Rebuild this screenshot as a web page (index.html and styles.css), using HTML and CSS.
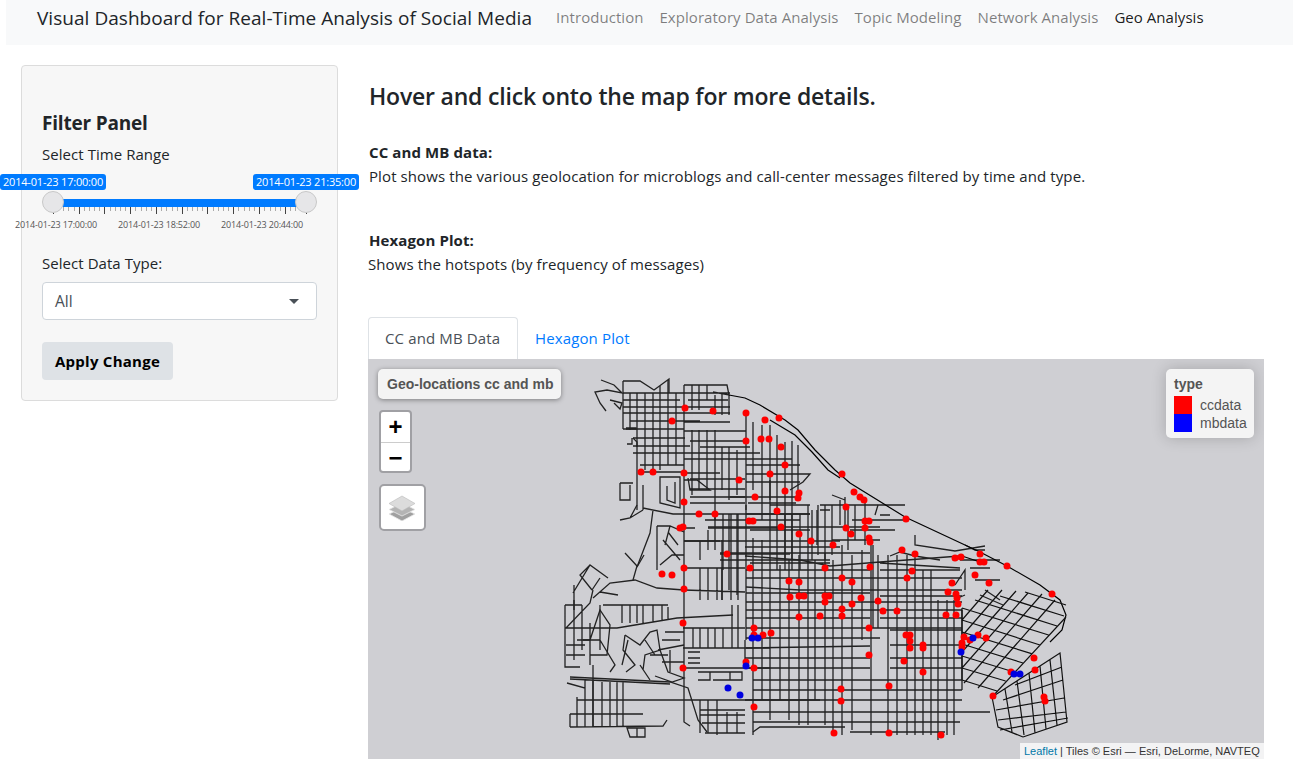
FILE: index.html
```html
<!DOCTYPE html>
<html lang="en">
<head>
<meta charset="utf-8">
<title>Visual Dashboard</title>
<link rel="stylesheet" href="styles.css">
</head>
<body>
<nav class="navbar">
  <span class="brand">Visual Dashboard for Real-Time Analysis of Social Media</span>
  <a class="nav-link">Introduction</a>
  <a class="nav-link">Exploratory Data Analysis</a>
  <a class="nav-link">Topic Modeling</a>
  <a class="nav-link">Network Analysis</a>
  <a class="nav-link active">Geo Analysis</a>
</nav>
<div class="page">
  <aside class="well">
    <h4 class="panel-title">Filter Panel</h4>
    <div class="label">Select Time Range</div>
    <div class="slider">
      <span class="from">2014-01-23 17:00:00</span>
      <span class="to">2014-01-23 21:35:00</span>
      <div class="track"></div>
      <svg class="ticks" width="275" height="12" viewBox="42 208 275 12">
        <path class="minor" d="M58.500 208v4M63.500 208v4M68.500 208v4M74.500 208v4M84.500 208v4M89.500 208v4M94.500 208v4M99.500 208v4M110.500 208v4M115.500 208v4M120.500 208v4M125.500 208v4M135.500 208v4M141.500 208v4M146.500 208v4M151.500 208v4M161.500 208v4M166.500 208v4M172.500 208v4M177.500 208v4M187.500 208v4M192.500 208v4M197.500 208v4M202.500 208v4M213.500 208v4M218.500 208v4M223.500 208v4M228.500 208v4M238.500 208v4M244.500 208v4M249.500 208v4M254.500 208v4M264.500 208v4M270.500 208v4M275.500 208v4M280.500 208v4M290.500 208v4M295.500 208v4M300.500 208v4"/>
        <path class="major" d="M53.500 208v7M79.500 208v7M104.500 208v7M130.500 208v7M156.500 208v7M182.500 208v7M207.500 208v7M233.500 208v7M259.500 208v7M285.500 208v7M306.500 208v7"/>
      </svg>
      <i class="handle handle-l"></i>
      <i class="handle handle-r"></i>
      <div class="tick-labels">
        <span>2014-01-23 17:00:00</span>
        <span>2014-01-23 18:52:00</span>
        <span>2014-01-23 20:44:00</span>
      </div>
    </div>
    <div class="label label-type">Select Data Type:</div>
    <div class="select"><span>All</span><i class="caret"></i></div>
    <button class="apply">Apply Change</button>
  </aside>
  <main class="main">
    <h4 class="headline">Hover and click onto the map for more details.</h4>
    <p class="desc"><b>CC and MB data:</b><br>Plot shows the various geolocation for microblogs and call-center messages filtered by time and type.</p>
    <p class="desc desc-hex"><b>Hexagon Plot:</b><br>Shows the hotspots (by frequency of messages)</p>
    <div class="tabs">
      <a class="tab active">CC and MB Data</a>
      <a class="tab">Hexagon Plot</a>
    </div>
    <div class="map">
      <svg class="streets" width="896" height="400" viewBox="368 359 896 400">
        <path class="road" d="M623 381V429M630 393V430M637 393V510M645 393V470M653 393V470M660 386V470M668 380V465M676 393V465M684 385V722l6 4M692 385V410M692 430V495M699 385V410M699 430V490M707 385V400M707 430V490M715 395V415M715 430V520M722 393V415M722 447V490M729 395V415M729 447V500M737 450V495M746 412V510M753 422V490M762 425V520M770 425V570M777 435V570M785 442V560M792 441V560M798 445V500"/>
        <path class="road" d="M623 381H640L654 390L669 379V393M684 385H727L729 395L713 392M623 393H730M623 400H680M688 400H728M623 407H730M623 413H730M630 421H700M623 429H684M684 422H730M684 431H746M633 438H685M690 441H746M633 446H690M700 447H750M633 453H760M684 459H792M640 465H684M746 465H800M640 472H684M684 473H720M746 474H810L803 482L790 490M690 479H745M746 482H800M690 489H745M730 497H800M748 503H796"/>
        <path class="road" d="M601 380L614 385L622 393L607 390L595 392L600 403L606 411M610 400L622 403L620 409L614 403M626 429H636V428H626M633 438L637 442V447M627 444H632V438M620 483H633M620 483V500H630V485M643 485V510M660 477H680V508L660 503ZM667 486V500L675 503V482M643 508L673 514L684 514H810M653 510L650 533L637 567M643 510L630 518L620 520M637 505L630 518M684 480H697L710 490H690L688 478"/>
        <path class="road" d="M715 514V550M722 540V600M729 514V590M737 514V595M746 505V640M708 528H780M684 528H695M684 541H720M720 554H790M720 560H830M750 530H810M770 505H810M812 510V560M820 510H830M808 505V560M825 505V560M840 500V525M832 495L845 500M845 497V525M855 505V540M865 503V545M878 505L875 515M880 515H890M880 530H895M852 520H905M850 530H895M832 540H880"/>
        <path class="road" d="M723 514V570M731 514V600M738 514V600M785 514V570M792 514V570M800 514V570M708 527H880M684 541H840M720 553H870M705 520H800M745 547H840M690 497H745M690 503H745M770 480V500M700 541V560M708 530V550M818 505V555M832 505V555M848 505V550"/>
        <path class="road" d="M657 526H670L684 532M657 526V570M668 532L678 545M663 540L680 560M670 526L665 545M684 555H672L660 565M644 555L637 567M625 553L637 566L633 580"/>
        <path class="road" d="M745 640V662M753 538V735M762 540V700M770 570V720M780 565V700M789 560V720M799 555V725M808 560V725M815 560V700M825 553V725M833 560V735M842 545V735M852 555V730M862 550V640M871 545V735M873 545V628M878 555V628M888 555V735M897 555V735M907 555V735M915 555V735M923 570V735M931 570V735M938 600V740M947 600V735M954 600V735M962 610V690"/>
        <path class="road" d="M745 556L800 560L830 566L880 562L960 556M750 563H830M880 563L960 568M746 570H870M880 570H960M746 578H962M746 587L800 590H962M746 593H870M880 596H962M746 602H962M746 610H962M746 618H870M880 618H962M746 628H962M746 638H880M890 630H962M746 648L870 646M890 645H962M745 658H870M890 658H962M745 668H870M890 668H962M753 680H962M753 690H962M745 700H962M753 712H990M753 722H960M753 732L760 727H845M850 732H945"/>
        <path class="road" d="M890 556L900 552L915 556L940 560M915 535L915 545L955 551L985 546M965 545L975 550H985M960 560H1000M970 568H990M975 580H1000M965 590V570L955 585M958 598L965 595M985 590L1000 600M980 595L1003 605"/>
        <path class="road" d="M684 568H745M700 568V600M708 568V600M717 568V600M722 568V600M684 590L745 592M683 628H745M683 648H770M693 628V648M700 628V648M708 628V648M715 628V648M723 628V648M732 605V648M738 605V648M688 652H700M688 658H700M688 663H700M684 668H770M698 672H742V680H713M698 680H710V672M730 672V680M700 700V733M708 700V733M717 700V735M727 712V733M737 712V733M700 710H745M700 715H745M702 723H745M705 733H745"/>
        <path class="road" d="M593 598L610 583L635 580L657 588L684 590M566 628L590 603L593 590M565 605V667H580M565 605H582M573 593L590 565L608 578M590 565L580 575L592 590M600 578L592 590M574 585V610M582 605V650M583 640H590L600 610L610 625L607 655H590M603 605H668M600 592L618 595M622 605V623M630 605V623M637 605V623M643 605V623M653 605V622M662 605V620M668 607V620M565 628H617L677 618L733 615M593 665V727M590 623V665"/>
        <path class="road" d="M625 635L640 645L650 632L657 630L660 650L645 655L643 670M625 635L623 650L635 665L626 672M660 650L668 672L684 678L672 682L655 676M665 632H684M662 640H680M658 650L684 645M650 655H668M574 600V660M600 605V650M577 640H600M566 645H585M566 655H585M600 640L615 665L610 672M640 665L650 680M628 640L622 665M645 640L655 655M670 650V672M662 662H684"/>
        <path class="road" d="M570 677L670 682L688 688L698 720L707 732M570 679L670 684M567 683L585 688L585 691M577 697V727M585 680V727M593 680V727M602 682V727M610 682V727M617 682V727M623 682V727M577 700H820M570 714H643M570 714V727M570 727L663 726L667 720M627 728H645V737H630ZM637 728V737"/>
        <path class="road" d="M820 505H905M746 514H810M817 510V545"/>
        <path class="coast" d="M729 395L745 398L760 405L785 420L798 430L815 450L835 470L850 483L905 517L980 552L1007 566L1040 585L1060 600L1066 615L1062 630L1050 642M770 420L795 435L812 452L828 470L840 478M962 556L980 562"/>
        <path class="grid" d="M962 608L1048.600 635M975 600L1057 626M1000 596L1064 616M1025 592L1066 605M962 620L1040 645M962 632L1031.500 653.600M962 644L1023 663M962 656L1014 672M962 668L1005.600 681M962 680L997 691M993 696L1066 617M978 688L1055 600M964 683L1042 594M962 668L1028 593M962 652L1016 591M962 636L1002 590M962 620L988 590M962 608V680"/>
        <path class="grid" d="M992 697L1060 653L1067 722L1023 737M992 697L998 727L1023 737M1005 689L1012 732M1017 681L1024 735M1029 673L1035 733M1040 666L1046 729M1050 660L1057 725M996 710L1064 698M998 720L1066 712M1003 700L1063 680M1015 685L1062 667M1000 730L1068 718"/>
        <path class="dots red" d="M685 408h0M713 411h0M746 413h0M765 420h0M779 418h0M672 421h0M746 441h0M761 439h0M769 439h0M781 447h0M785 465h0M641 472h0M653 472h0M684 473h0M770 474h0M842 474h0M739 480h0M785 491h0M799 493h0M798 498h0M755 497h0M854 492h0M860 497h0M864 500h0M684 502h0M846 507h0M777 511h0M699 514h0M715 514h0M906 519h0M749 521h0M753 521h0M865 521h0M869 521h0M680 528h0M683 527h0M781 527h0M846 528h0M865 528h0M851 534h0M799 534h0M869 538h0M811 541h0M870 542h0M833 545h0M902 550h0M915 554h0M727 554h0M684 568h0M750 568h0M825 568h0M870 567h0M912 571h0M662 574h0M672 575h0M684 589h0M789 581h0M799 582h0M790 597h0M799 596h0M804 596h0M799 617h0M820 616h0M683 623h0M754 628h0M754 635h0M763 635h0M771 633h0M746 662h0M754 668h0M683 668h0M754 707h0M955 558h0M961 557h0M980 554h0M980 562h0M984 562h0M1007 566h0M907 578h0M975 575h0M842 578h0M852 582h0M952 583h0M989 583h0M1052 594h0M948 592h0M956 594h0M957 598h0M958 604h0M825 596h0M829 596h0M825 602h0M861 598h0M878 601h0M852 604h0M842 609h0M883 611h0M897 611h0M946 615h0M956 615h0M842 616h0M869 628h0M906 635h0M910 635h0M910 641h0M910 648h0M923 645h0M923 648h0M964 637h0M970 640h0M978 635h0M986 638h0M962 643h0M962 647h0M869 655h0M904 661h0M1034 658h0M1035 670h0M923 672h0M1011 672h0M889 686h0M841 689h0M993 696h0M1044 697h0M1045 701h0M841 701h0M834 733h0M889 733h0M941 735h0"/>
        <path class="dots blue" d="M752 638h0M758 638h0M746 666h0M728 688h0M740 695h0M973 638h0M961 652h0M1014 674h0M1020 674h0"/>
      </svg>
      <div class="map-title">Geo-locations cc and mb</div>
      <div class="zoom-control">
        <span class="zoom-btn">+</span>
        <span class="zoom-btn zoom-out">&minus;</span>
      </div>
      <div class="layers-control">
        <svg width="28" height="26" viewBox="0 0 28 26">
          <path class="layer-c" d="M14 13L27 19L14 26L1 19Z"/>
          <path class="layer-b" d="M14 8L27 14.500L14 21L1 14.500Z"/>
          <path class="layer-a" d="M14 1L27 8.500L14 16L1 8.500Z"/>
        </svg>
      </div>
      <div class="legend">
        <div class="legend-title">type</div>
        <div class="legend-row"><i class="swatch swatch-red"></i><span>ccdata</span></div>
        <div class="legend-row"><i class="swatch swatch-blue"></i><span>mbdata</span></div>
      </div>
      <div class="attribution"><a>Leaflet</a> | Tiles &copy; Esri &mdash; Esri, DeLorme, NAVTEQ</div>
    </div>
  </main>
</div>
</body>
</html>
```
FILE: styles.css
```css
* { box-sizing: border-box; }
html, body { margin: 0; padding: 0; }
body {
  font-family: "Open Sans", "Noto Sans", sans-serif;
  font-size: 16px;
  line-height: 24px;
  color: #212529;
  background: #fff;
  height: 783px;
  overflow: hidden;
}
.navbar {
  margin-left: 6px;
  height: 45px;
  background: #f8f9fa;
  display: flex;
  align-items: flex-start;
  padding: 5px 0 0 31px;
}
.brand {
  font-size: 19px;
  letter-spacing: 0.04px;
  line-height: 26px;
  color: #212529;
  margin-right: 16px;
  white-space: nowrap;
}
.nav-link {
  padding: 0 8px;
  color: rgba(0, 0, 0, .5);
  font-size: 15px;
  letter-spacing: 0.05px;
  white-space: nowrap;
}
.nav-link.active { color: rgba(0, 0, 0, .9); }
.page {
  display: flex;
  align-items: flex-start;
  padding: 20px 0 0 21px;
}
.well {
  width: 317px;
  height: 336px;
  flex: none;
  background: #f7f7f7;
  border: 1px solid #dcdcdc;
  border-radius: 4px;
  padding: 44px 20px 0;
}
.panel-title {
  margin: 0;
  font-size: 19px;
  line-height: 26px;
  font-weight: 700;
  letter-spacing: -0.2px;
}
.label {
  font-size: 15px;
  line-height: 24px;
  margin-top: 6px;
  letter-spacing: 0.05px;
}
.slider { position: relative; height: 81px; margin-top: 4px; }
.from, .to {
  position: absolute;
  top: 4px;
  height: 16px;
  background: #007bff;
  color: #fff;
  font-size: 11px;
  line-height: 16px;
  padding: 0 3px;
  border-radius: 3px;
  white-space: nowrap;
  letter-spacing: -0.2px;
}
.from { left: -42px; width: 106px; }
.to { left: 211px; width: 106px; }
.track {
  position: absolute;
  left: 11px;
  right: 11px;
  top: 29px;
  height: 8px;
  background: #007bff;
}
.handle {
  position: absolute;
  top: 21px;
  width: 22px;
  height: 22px;
  border-radius: 50%;
  background: #e6e6e8;
  border: 1px solid #c8c8c8;
}
.handle-l { left: 0; }
.handle-r { left: 253px; }
.ticks { position: absolute; left: 0; top: 37px; }
.minor { stroke: #aaa; stroke-width: 1; fill: none; }
.major { stroke: #444; stroke-width: 1; fill: none; }
.tick-labels { position: absolute; top: 47px; left: -27px; display: flex; gap: 22px; }
.tick-labels span {
  width: 81px;
  font-size: 9px;
  line-height: 16px;
  color: #555;
  white-space: nowrap;
  letter-spacing: -0.15px;
}
.label-type { margin-top: 0; margin-bottom: 7px; }
.select {
  height: 38px;
  background: #fff;
  border: 1px solid #ced4da;
  border-radius: 4px;
  padding: 6px 12px;
  color: #495057;
  font-size: 15.500px;
  display: flex;
  align-items: center;
  justify-content: space-between;
}
.caret {
  width: 0;
  height: 0;
  border-left: 5px solid transparent;
  border-right: 5px solid transparent;
  border-top: 5px solid #495057;
  margin-right: 5px;
}
.apply {
  display: block;
  margin-top: 22px;
  width: 131px;
  height: 38px;
  border: 0;
  border-radius: 4px;
  background: #dee2e6;
  color: #000;
  font: 700 15px/24px "Open Sans", sans-serif;
  letter-spacing: 0.25px;
  padding: 0;
}
.main { margin-left: 30px; width: 896px; flex: none; }
.headline {
  margin: 0;
  padding: 18px 0 0 1px;
  font-size: 23px;
  line-height: 26px;
  font-weight: 600;
  letter-spacing: -0.2px;
}
.desc {
  margin: 31px 0 0;
  padding-left: 1px;
  font-size: 15px;
  letter-spacing: 0.1px;
}
.desc b { font-weight: 700; }
.desc-hex { margin-top: 40px; padding-left: 0; }
.desc-hex b { margin-left: 1px; }
.tabs {
  display: flex;
  margin-top: 41px;
  height: 42px;
}
.tab {
  padding: 9px 17px 0 17px;
  color: #007bff;
  font-size: 15px;
  letter-spacing: 0.13px;
  white-space: nowrap;
}
.tab.active {
  width: 150px;
  color: #495057;
  background: #fff;
  border: 1px solid #dee2e6;
  border-bottom: 0;
  border-radius: 4px 4px 0 0;
  padding-top: 8px;
  padding-left: 16px;
}
.map {
  position: relative;
  width: 896px;
  height: 400px;
  background: #cfcfd3;
  font-family: "Liberation Sans", Arial, sans-serif;
  overflow: hidden;
}
.streets { display: block; }
.road { fill: none; stroke: #222; stroke-width: 1.300; }
.grid { fill: none; stroke: #111; stroke-width: 1.200; }
.coast { fill: none; stroke: #000; stroke-width: 1.200; }
.dots { fill: none; stroke-width: 7; stroke-linecap: round; }
.red { stroke: #f00; }
.blue { stroke: #0000e0; }
.map-title {
  position: absolute;
  left: 10px;
  top: 10px;
  width: 183px;
  height: 30px;
  background: #f4f4f4;
  border-radius: 5px;
  box-shadow: 0 1px 5px rgba(0, 0, 0, .4);
  color: #555;
  font-weight: 700;
  font-size: 14px;
  line-height: 30px;
  padding-left: 9px;
  white-space: nowrap;
}
.zoom-control {
  position: absolute;
  left: 11px;
  top: 51px;
  width: 33px;
  border: 2px solid #a0a0a4;
  border-radius: 4px;
  background: #fff;
}
.zoom-btn {
  display: block;
  height: 30px;
  font-size: 24px;
  line-height: 29px;
  font-weight: 700;
  text-align: center;
  color: #000;
}
.zoom-out { height: 29px; border-top: 1px solid #ccc; }
.layers-control {
  position: absolute;
  left: 11px;
  top: 125px;
  width: 47px;
  height: 47px;
  border: 2px solid #a0a0a4;
  border-radius: 5px;
  background: #fff;
  display: flex;
  align-items: center;
  justify-content: center;
}
.layers-control svg { margin-left: -1px; }
.layer-a { fill: #dcdcdc; stroke: #bbb; stroke-width: .6; }
.layer-b { fill: #b4b4b4; stroke: #e8e8e8; stroke-width: .8; }
.layer-c { fill: #a0a0a0; stroke: #e8e8e8; stroke-width: .8; }
.legend {
  position: absolute;
  left: 798px;
  top: 10px;
  width: 88px;
  height: 69px;
  background: #f4f4f4;
  border-radius: 5px;
  box-shadow: 0 0 15px rgba(0, 0, 0, .2);
  padding: 7px 8px;
  color: #555;
  font-size: 14px;
  line-height: 16px;
}
.legend-title { font-weight: 700; height: 20px; line-height: 16px; }
.legend-row { display: flex; height: 18px; align-items: center; }
.swatch { width: 18px; height: 18px; margin-right: 8px; flex: none; }
.swatch-red { background: #f00; }
.swatch-blue { background: #00f; }
.attribution {
  position: absolute;
  right: 0;
  bottom: 0;
  width: 244px;
  height: 16px;
  background: rgba(255, 255, 255, .75);
  color: #333;
  font-size: 11px;
  line-height: 16px;
  padding-left: 4px;
  white-space: nowrap;
}
.attribution a { color: #0078a8; }
```
